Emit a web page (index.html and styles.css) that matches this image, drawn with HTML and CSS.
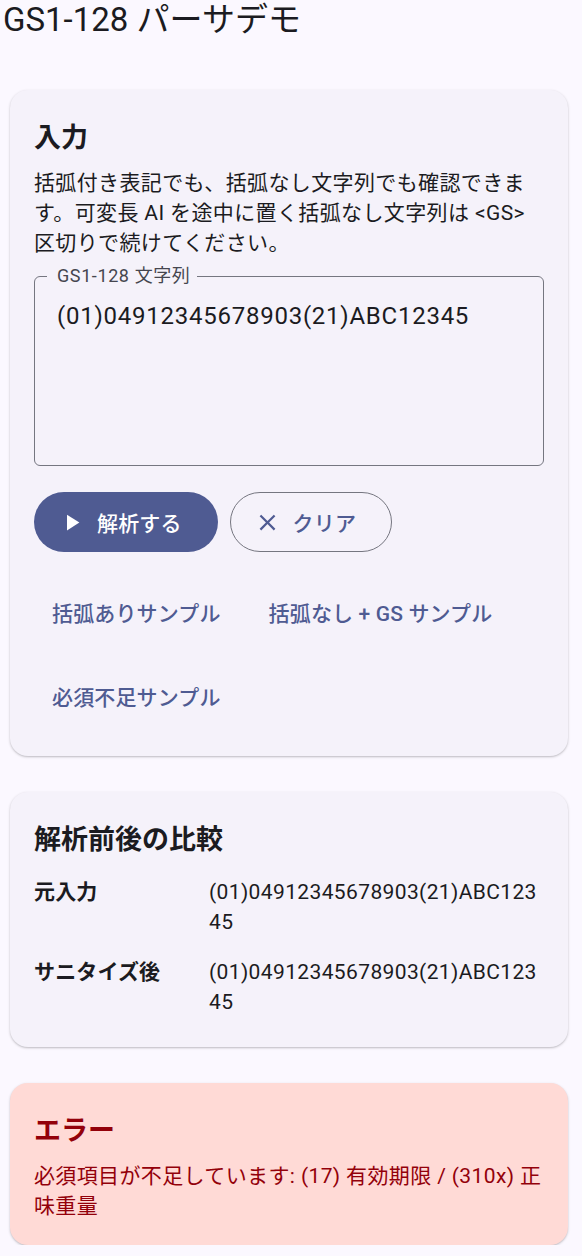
FILE: index.html
```html
<!DOCTYPE html>
<html lang="ja">
<head>
<meta charset="utf-8">
<title>GS1-128 パーサデモ</title>
<link rel="stylesheet" href="styles.css">
</head>
<body>
<h1 class="app-title">GS1-128 パーサデモ</h1>
<main class="content">
  <section class="card">
    <h2 class="card-title">入力</h2>
    <p class="desc">括弧付き表記でも、括弧なし文字列でも確認できます。可変長 AI を途中に置く括弧なし文字列は &lt;GS&gt; 区切りで続けてください。</p>
    <fieldset class="field">
      <legend class="field-label">GS1-128 文字列</legend>
      <div class="field-value">(01)04912345678903(21)ABC12345</div>
    </fieldset>
    <div class="actions">
      <button class="btn btn-filled" type="button">
        <svg class="btn-icon" viewBox="0 0 24 24" aria-hidden="true"><path d="M8 5v14l11-7z"/></svg>
        <span>解析する</span>
      </button>
      <button class="btn btn-outlined" type="button">
        <svg class="btn-icon" viewBox="0 0 24 24" aria-hidden="true"><path d="M19 6.41 17.59 5 12 10.59 6.41 5 5 6.41 10.59 12 5 17.59 6.41 19 12 13.41 17.59 19 19 17.59 13.41 12z"/></svg>
        <span>クリア</span>
      </button>
    </div>
    <div class="samples">
      <button class="btn-text" type="button">括弧ありサンプル</button>
      <button class="btn-text" type="button">括弧なし + GS サンプル</button>
      <button class="btn-text" type="button">必須不足サンプル</button>
    </div>
  </section>

  <section class="card">
    <h2 class="card-title">解析前後の比較</h2>
    <div class="compare">
      <div class="compare-label">元入力</div>
      <div class="compare-value">(01)04912345678903(21)ABC12345</div>
      <div class="compare-label">サニタイズ後</div>
      <div class="compare-value">(01)04912345678903(21)ABC12345</div>
    </div>
  </section>

  <section class="card card-error">
    <h2 class="card-title">エラー</h2>
    <p class="desc">必須項目が不足しています: (17) 有効期限 / (310x) 正味重量</p>
  </section>
</main>
</body>
</html>
```

FILE: styles.css
```css
html, body {
  margin: 0;
  padding: 0;
}

body {
  background: #fbf8ff;
  color: #1b1b21;
  font-family: Roboto, "Noto Sans CJK JP", sans-serif;
}

.app-title {
  margin: 0;
  padding-left: 3px;
  font-size: 33px;
  line-height: 40px;
  font-weight: 400;
  color: #1b1b21;
}

.content {
  display: flex;
  flex-direction: column;
  gap: 36px;
  margin-top: 50px;
  padding: 0 14px 0 10px;
}

.card {
  background: #f5f2fa;
  border-radius: 18px;
  padding: 30px 24px 24px;
  box-shadow: 0 1px 3px rgba(0, 0, 0, 0.16), 0 1px 1.5px rgba(0, 0, 0, 0.1);
}

.card-title {
  margin: 0;
  font-size: 27px;
  line-height: 36px;
  font-weight: 700;
  color: #1b1b21;
}

.desc {
  margin: 12px 0 0;
  font-size: 21px;
  line-height: 30px;
  letter-spacing: 0.375px;
  color: #1b1b21;
}

.field {
  margin: 6px 0 0;
  min-width: 0;
  border: 1px solid #757680;
  border-radius: 6px;
  padding: 10px 21px 23px 12px;
}

.field-label {
  padding: 0 7px 0 10px;
  font-size: 18px;
  line-height: 24px;
  letter-spacing: 0.6px;
  color: #45464f;
}

.field-value {
  margin-left: 10px;
  min-height: 144px;
  font-size: 24px;
  line-height: 36px;
  letter-spacing: 0.75px;
  color: #1b1b21;
}

.actions {
  display: flex;
  gap: 12px;
  margin-top: 26px;
}

.btn {
  display: flex;
  align-items: center;
  gap: 12px;
  height: 60px;
  box-sizing: border-box;
  padding: 0 36px 0 24px;
  border-radius: 30px;
  font-family: inherit;
  font-size: 21px;
  font-weight: 500;
  letter-spacing: 0.15px;
  cursor: pointer;
}

.btn-icon {
  width: 27px;
  height: 27px;
  flex: none;
  fill: currentColor;
}

.btn-filled {
  background: #4f5b92;
  color: #ffffff;
  border: 0;
}

.btn-outlined {
  background: transparent;
  color: #4f5b92;
  border: 1px solid #757680;
  padding-left: 23px;
  padding-right: 35px;
}

.samples {
  display: flex;
  flex-wrap: wrap;
  gap: 12px;
  margin-top: 24px;
}

.btn-text {
  height: 72px;
  padding: 0 18px;
  border: 0;
  background: transparent;
  color: #4f5b92;
  font-family: inherit;
  font-size: 21px;
  font-weight: 500;
  letter-spacing: 0.15px;
  cursor: pointer;
}

.compare {
  display: grid;
  grid-template-columns: 175px 1fr;
  row-gap: 20px;
  margin-top: 19px;
  padding-bottom: 6px;
}

.compare-label {
  font-size: 21px;
  line-height: 30px;
  font-weight: 700;
  letter-spacing: 0.15px;
  color: #1b1b21;
}

.compare-value {
  padding-right: 2px;
  font-size: 21px;
  line-height: 30px;
  letter-spacing: 0.375px;
  word-break: break-all;
  color: #1b1b21;
}

.card-error {
  background: #ffdad6;
}

.card-error .card-title,
.card-error .desc {
  color: #93000a;
}
```
